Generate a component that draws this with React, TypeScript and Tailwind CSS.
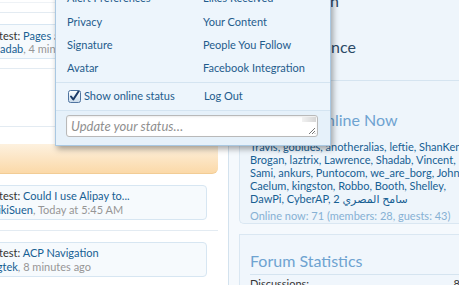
import React from "react";

const font = "font-['Lato','DejaVu_Sans',sans-serif]";

function ThreadBox({ title, user, time }: { title: string; user: string; time: string }) {
  return (
    <div className="mr-[11px] h-[35px] rounded-r-[4px] border border-[#d7e6f2] bg-[#f6fafd] pl-[15px] pt-[3px] leading-[14px]">
      <div className="whitespace-nowrap">
        <span className="text-[#333]">Latest: </span>
        <span className="text-[#176093]">{title}</span>
      </div>
      <div className="whitespace-nowrap">
        <span className="text-[#176093]">{user}</span>
        <span className="text-[#969696]">, {time}</span>
      </div>
    </div>
  );
}

function CheckBox() {
  return (
    <svg width="13" height="13" viewBox="0 0 13 13" className="shrink-0">
      <defs>
        <linearGradient id="cb" x1="0" y1="0" x2="0" y2="1">
          <stop offset="0" stopColor="#ffffff" />
          <stop offset="1" stopColor="#c9daea" />
        </linearGradient>
      </defs>
      <rect x="0.5" y="0.5" width="12" height="12" rx="2" fill="url(#cb)" stroke="#4f74a0" />
      <path d="M3 6.5 L5.3 9.5 L10.5 1.5" fill="none" stroke="#1c3a66" strokeWidth="2" strokeLinecap="round" strokeLinejoin="round" />
    </svg>
  );
}

export default function App() {
  const leftLinks = ["Alert Preferences", "Privacy", "Signature", "Avatar"];
  const rightLinks = ["Likes Received", "Your Content", "People You Follow", "Facebook Integration"];

  return (
    <div className={`relative flex h-[285px] w-[459px] overflow-hidden bg-white text-[11px] ${font}`}>
      {/* main content */}
      <div className="w-[228px] shrink-0 overflow-hidden">
        <div className="ml-[-28px] w-[246px]">
          <div className="h-[3px] border-b border-[#eef2f6]" />
          <div className="h-[10px] border-b border-[#e3ebf2]" />
          <div className="mt-[11px] mr-[11px] h-[35px] rounded-r-[4px] border border-[#d7e6f2] bg-[#f6fafd] pl-[15px] pt-[4px] leading-[13px]">
            <div className="whitespace-nowrap">
              <span className="text-[#333]">Latest: </span>
              <span className="text-[#176093]">Pages and more</span>
            </div>
            <div className="whitespace-nowrap">
              <span className="text-[#176093]">Shadab</span>
              <span className="text-[#969696]">, 4 minutes ago</span>
            </div>
          </div>
          <div className="h-[10px] border-b border-[#e3ebf2]" />
          <div className="h-[58px] border-b border-[#e3ebf2]" />
          <div className="mt-[17px] h-[30px] rounded-b-[6px] border-b border-[#f2cc95] bg-gradient-to-b from-[#fdf1df] to-[#fbd9a8]" />
          <div className="mt-[11px]">
            <ThreadBox title="Could I use Alipay to..." user="MikiSuen" time="Today at 5:45 AM" />
          </div>
          <div className="h-[11px] border-b border-[#e3ebf2]" />
          <div className="mt-[11px]">
            <ThreadBox title="ACP Navigation" user="digtek" time="8 minutes ago" />
          </div>
        </div>
      </div>

      {/* sidebar */}
      <div className="flex-1 border-l border-[#d3e2ee] bg-[#f5f9fd] pl-[10px]">
        <div className="h-[233px] rounded-bl-[5px] border-b border-l border-[#dae7f2] bg-[#eef5fb]">
          <div className="h-[90px] border-b border-[#d5e4f0] text-[16px] leading-[20px] text-[#2b4a66]">
            <div className="mt-[-9px] w-[99px] whitespace-nowrap text-right">Sign In</div>
            <div className="mt-[26px] w-[116px] whitespace-nowrap text-right">Preference</div>
          </div>
          <div className="mt-[29px] whitespace-nowrap pl-[3px] text-[16px] leading-[20px] text-[#6ea3d1]">
            Members Online Now
          </div>
          <div className="mt-[10px] whitespace-nowrap pl-[10px] leading-[13px] text-[#176093]">
            <div>Travis, goblues, anotheralias, leftie, ShanKenshin,</div>
            <div>Brogan, laztrix, Lawrence, Shadab, Vincent,</div>
            <div>Sami, ankurs, Puntocom, we_are_borg, John,</div>
            <div>Caelum, kingston, Robbo, Booth, Shelley,</div>
            <div>DawPi, CyberAP, 2 سامح المصري</div>
          </div>
          <div className="mt-[4px] whitespace-nowrap pl-[10px] leading-[13px] text-[#86b1d4]">
            Online now: 71 (members: 28, guests: 43)
          </div>
        </div>
        <div className="mt-[10px] border-l border-t border-[#dae7f2] bg-[#f0f6fc] pl-[10px]">
          <div className="pt-[16px] text-[16px] leading-[20px] text-[#6ea3d1]">Forum Statistics</div>
          <div className="mt-[3px] flex justify-between border-t border-[#d5e4f0] pt-[2px] leading-[13px] text-[#333]">
            <span>Discussions:</span>
            <span className="pr-[2px]">8,412</span>
          </div>
        </div>
      </div>

      {/* account popup */}
      <div className="absolute left-[55px] top-[-14px] w-[276px] border border-[#a9c8e2] bg-[#edf5fc] shadow-[2px_3px_6px_rgba(0,0,0,0.35)]">
        <div className="grid grid-cols-[136px_1fr] pb-[2px] pl-[11px] text-[#1f5c8c]">
          {leftLinks.map((l, i) => (
            <React.Fragment key={l}>
              <div className="flex h-[23.3px] items-center whitespace-nowrap">{l}</div>
              <div className="flex h-[23.3px] items-center whitespace-nowrap">{rightLinks[i]}</div>
            </React.Fragment>
          ))}
        </div>
        <div className="grid h-[28px] grid-cols-[136px_1fr] items-center border-t border-[#d4e4f1] pl-[12px] text-[#1f5c8c]">
          <div className="flex items-center gap-[3px] whitespace-nowrap">
            <CheckBox />
            <span>Show online status</span>
          </div>
          <div>Log Out</div>
        </div>
        <div className="border-t border-[#d4e4f1] bg-[#e6f1fa] pb-[8px] pl-[10px] pr-[12px] pt-[4px]">
          <div className="relative h-[22px] rounded-[3px] border border-[#b9b9b9] bg-white pl-[4px] text-[13px] italic leading-[20px] text-[#8f8f8f] shadow-[inset_0_1px_2px_rgba(0,0,0,0.08)]">
            Update your status…
            <div className="absolute right-[1px] top-[1px] h-[5px] w-[14px] bg-gradient-to-r from-[#f2f2f2] to-[#d6d6d6]" />
            <svg className="absolute bottom-[1px] right-[1px]" width="8" height="8" viewBox="0 0 8 8">
              <path d="M7 1 L1 7 M7 4 L4 7 M7 6.5 L6.5 7" stroke="#777" strokeWidth="1" />
            </svg>
          </div>
        </div>
      </div>
    </div>
  );
}
